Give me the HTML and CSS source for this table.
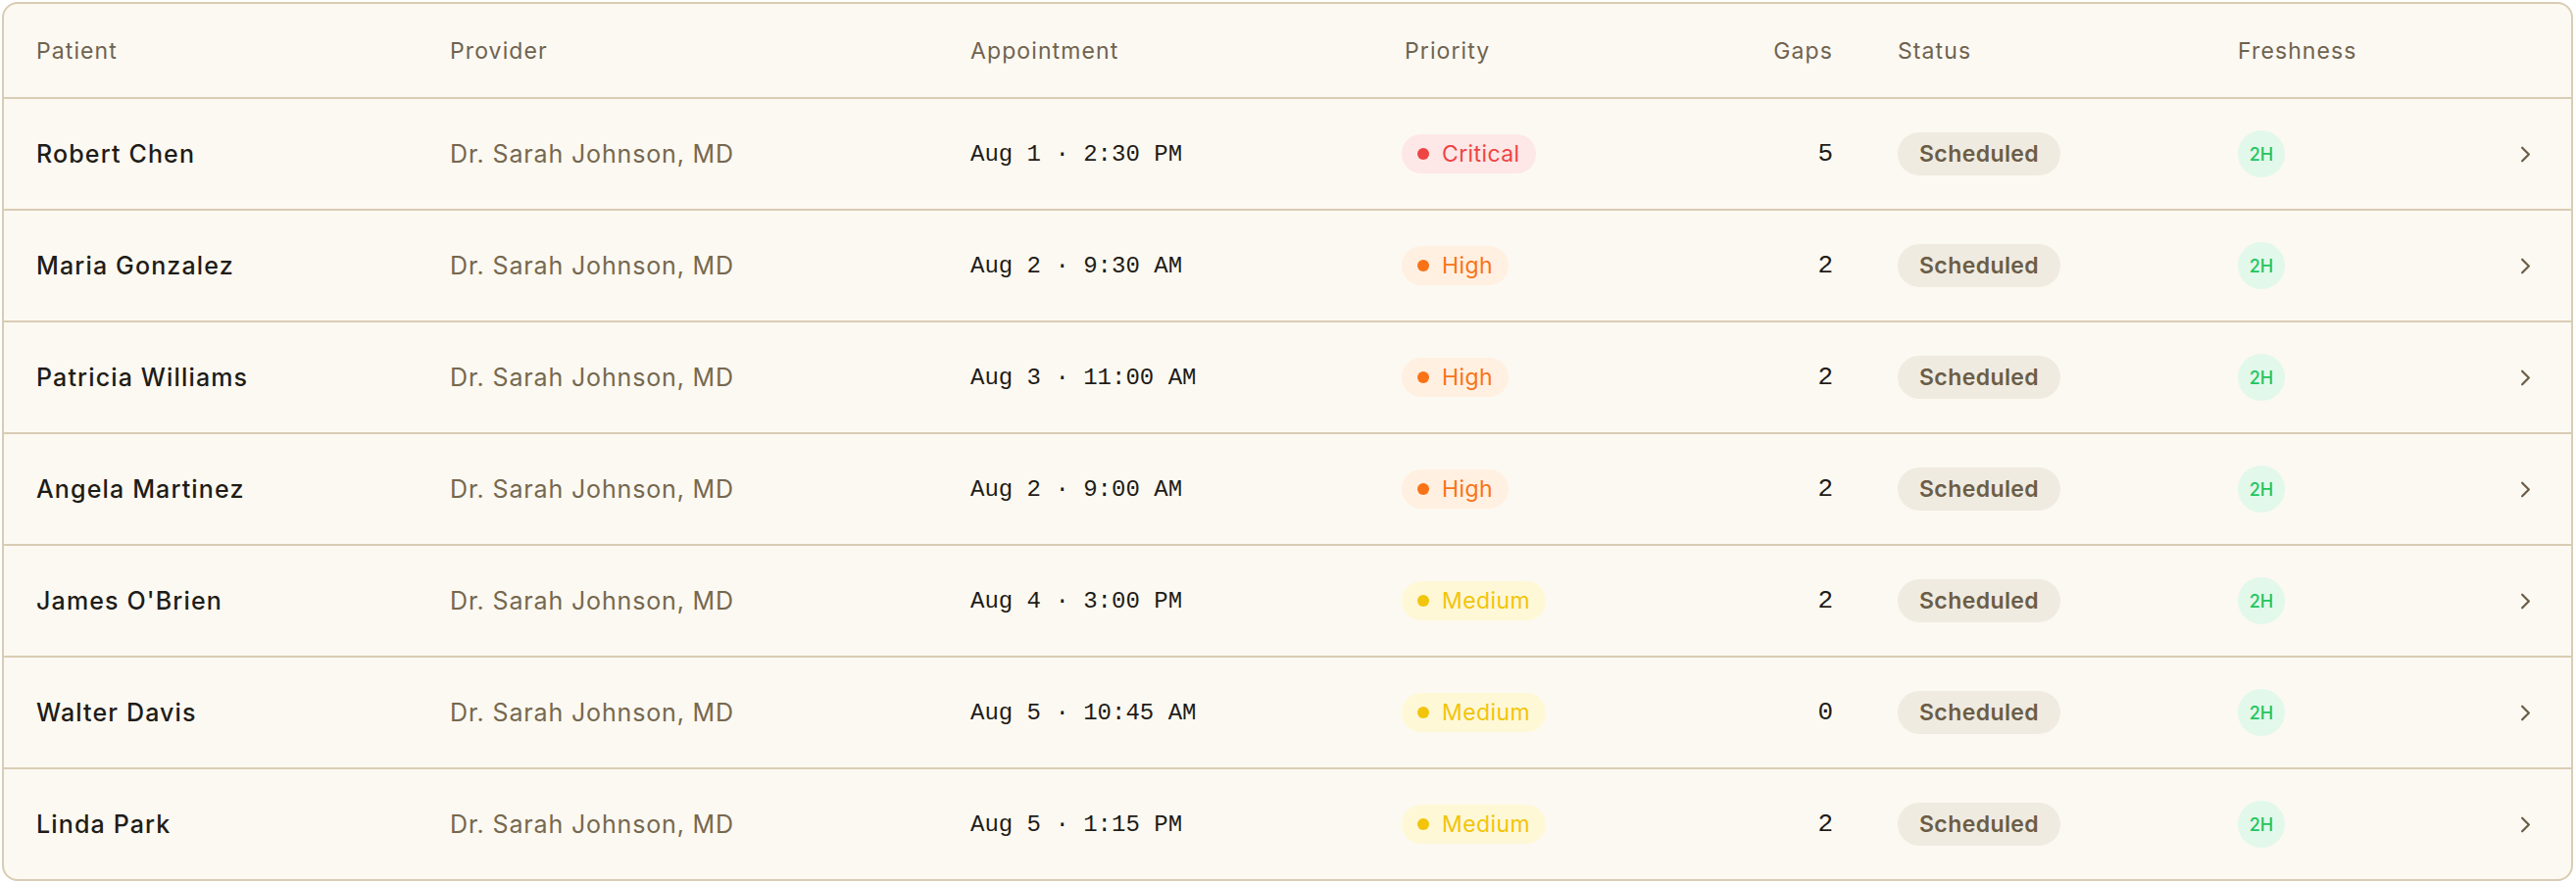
FILE: index.html
```html
<!DOCTYPE html>
<html lang="en">
<head>
<meta charset="utf-8">
<title>Appointments</title>
<link rel="stylesheet" href="styles.css">
</head>
<body>
<div class="card">
  <div class="row head">
    <div class="cell">Patient</div>
    <div class="cell">Provider</div>
    <div class="cell">Appointment</div>
    <div class="cell">Priority</div>
    <div class="cell right">Gaps</div>
    <div class="cell">Status</div>
    <div class="cell">Freshness</div>
    <div class="cell"></div>
  </div>

  <div class="row">
    <div class="cell name">Robert Chen</div>
    <div class="cell provider">Dr. Sarah Johnson, MD</div>
    <div class="cell mono">Aug 1 · 2:30 PM</div>
    <div class="cell"><span class="pill critical"><span class="dot"></span>Critical</span></div>
    <div class="cell right gaps">5</div>
    <div class="cell"><span class="status">Scheduled</span></div>
    <div class="cell"><span class="fresh">2H</span></div>
    <div class="cell chev-cell"><svg class="chev" viewBox="0 0 24 24"><path d="m9 18 6-6-6-6"/></svg></div>
  </div>

  <div class="row">
    <div class="cell name">Maria Gonzalez</div>
    <div class="cell provider">Dr. Sarah Johnson, MD</div>
    <div class="cell mono">Aug 2 · 9:30 AM</div>
    <div class="cell"><span class="pill high"><span class="dot"></span>High</span></div>
    <div class="cell right gaps">2</div>
    <div class="cell"><span class="status">Scheduled</span></div>
    <div class="cell"><span class="fresh">2H</span></div>
    <div class="cell chev-cell"><svg class="chev" viewBox="0 0 24 24"><path d="m9 18 6-6-6-6"/></svg></div>
  </div>

  <div class="row">
    <div class="cell name">Patricia Williams</div>
    <div class="cell provider">Dr. Sarah Johnson, MD</div>
    <div class="cell mono">Aug 3 · 11:00 AM</div>
    <div class="cell"><span class="pill high"><span class="dot"></span>High</span></div>
    <div class="cell right gaps">2</div>
    <div class="cell"><span class="status">Scheduled</span></div>
    <div class="cell"><span class="fresh">2H</span></div>
    <div class="cell chev-cell"><svg class="chev" viewBox="0 0 24 24"><path d="m9 18 6-6-6-6"/></svg></div>
  </div>

  <div class="row">
    <div class="cell name">Angela Martinez</div>
    <div class="cell provider">Dr. Sarah Johnson, MD</div>
    <div class="cell mono">Aug 2 · 9:00 AM</div>
    <div class="cell"><span class="pill high"><span class="dot"></span>High</span></div>
    <div class="cell right gaps">2</div>
    <div class="cell"><span class="status">Scheduled</span></div>
    <div class="cell"><span class="fresh">2H</span></div>
    <div class="cell chev-cell"><svg class="chev" viewBox="0 0 24 24"><path d="m9 18 6-6-6-6"/></svg></div>
  </div>

  <div class="row">
    <div class="cell name">James O'Brien</div>
    <div class="cell provider">Dr. Sarah Johnson, MD</div>
    <div class="cell mono">Aug 4 · 3:00 PM</div>
    <div class="cell"><span class="pill medium"><span class="dot"></span>Medium</span></div>
    <div class="cell right gaps">2</div>
    <div class="cell"><span class="status">Scheduled</span></div>
    <div class="cell"><span class="fresh">2H</span></div>
    <div class="cell chev-cell"><svg class="chev" viewBox="0 0 24 24"><path d="m9 18 6-6-6-6"/></svg></div>
  </div>

  <div class="row">
    <div class="cell name">Walter Davis</div>
    <div class="cell provider">Dr. Sarah Johnson, MD</div>
    <div class="cell mono">Aug 5 · 10:45 AM</div>
    <div class="cell"><span class="pill medium"><span class="dot"></span>Medium</span></div>
    <div class="cell right gaps">0</div>
    <div class="cell"><span class="status">Scheduled</span></div>
    <div class="cell"><span class="fresh">2H</span></div>
    <div class="cell chev-cell"><svg class="chev" viewBox="0 0 24 24"><path d="m9 18 6-6-6-6"/></svg></div>
  </div>

  <div class="row last">
    <div class="cell name">Linda Park</div>
    <div class="cell provider">Dr. Sarah Johnson, MD</div>
    <div class="cell mono">Aug 5 · 1:15 PM</div>
    <div class="cell"><span class="pill medium"><span class="dot"></span>Medium</span></div>
    <div class="cell right gaps">2</div>
    <div class="cell"><span class="status">Scheduled</span></div>
    <div class="cell"><span class="fresh">2H</span></div>
    <div class="cell chev-cell"><svg class="chev" viewBox="0 0 24 24"><path d="m9 18 6-6-6-6"/></svg></div>
  </div>
</div>
</body>
</html>
```

FILE: styles.css
```css
html, body {
  margin: 0;
  padding: 0;
  background: #ffffff;
}
body {
  padding: 2px 3px 2px 2px;
  font-family: Inter, "Liberation Sans", sans-serif;
}
.card {
  background: #fcf9f2;
  border: 2px solid #d9ccb4;
  border-radius: 16px;
  overflow: hidden;
}
.row {
  display: grid;
  grid-template-columns: 422px 531px 443px 300px 203px 347px 273px 1fr;
  height: 112px;
  border-bottom: 2px solid #d9ccb4;
  align-items: center;
}
.row.last {
  border-bottom: none;
}
.row.head {
  height: 95px;
  font-size: 23px;
  letter-spacing: 1.1px;
  color: #6f6350;
}
.cell {
  padding: 0 33px;
  white-space: nowrap;
  display: flex;
  align-items: center;
}
.cell.right {
  justify-content: flex-end;
}
.name {
  font-size: 25px;
  font-weight: 500;
  letter-spacing: 1.15px;
  color: #1f1c17;
}
.provider {
  font-size: 25px;
  letter-spacing: 0.85px;
  color: #76684f;
}
.mono {
  font-family: "Liberation Mono", "DejaVu Sans Mono", monospace;
  font-size: 24px;
  color: #1f1c17;
}
.gaps {
  font-family: "Liberation Mono", "DejaVu Sans Mono", monospace;
  font-size: 26px;
  color: #1f1c17;
  letter-spacing: 0;
}
.pill {
  display: inline-flex;
  align-items: center;
  height: 40px;
  margin-left: -3px;
  padding: 0 16px;
  border-radius: 20px;
  font-size: 23px;
  letter-spacing: 0.4px;
  gap: 13px;
}
.dot {
  width: 12px;
  height: 12px;
  border-radius: 50%;
  background: currentColor;
}
.critical {
  background: #fde7e7;
  color: #ef4444;
}
.high {
  background: #fff0e1;
  color: #f97316;
}
.medium {
  background: #fef8d6;
  color: #f2c40c;
}
.status {
  display: inline-flex;
  align-items: center;
  height: 44px;
  padding: 0 22px;
  border-radius: 22px;
  background: #f0ebe0;
  color: #6b5d48;
  font-size: 23px;
  font-weight: 600;
  letter-spacing: 0.4px;
}
.fresh {
  display: inline-flex;
  align-items: center;
  justify-content: center;
  width: 48px;
  height: 48px;
  border-radius: 50%;
  background: #e2f8ea;
  color: #22c55e;
  font-size: 18px;
  font-weight: 500;
}
.chev-cell {
  justify-content: flex-end;
}
.chev {
  width: 27px;
  height: 27px;
  fill: none;
  stroke: #6b5d48;
  stroke-width: 2;
  stroke-linecap: round;
  stroke-linejoin: round;
}
```
